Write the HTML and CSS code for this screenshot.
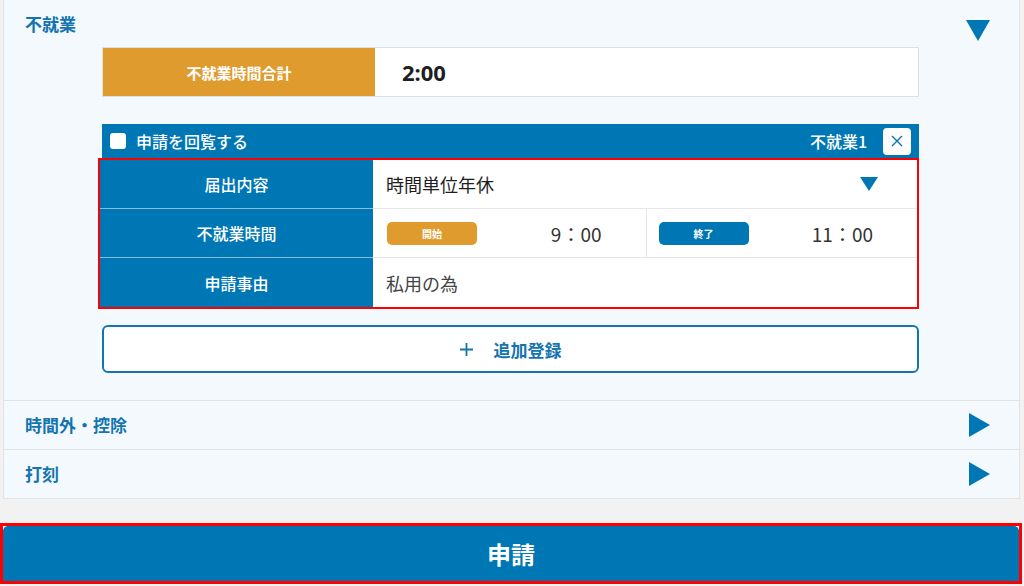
FILE: index.html
```html
<!DOCTYPE html>
<html lang="ja">
<head>
    <meta charset="UTF-8">
    <meta name="viewport" content="width=device-width, initial-scale=1.0">
    <title>不就業申請</title>
    <link rel="stylesheet" href="styles.css">
</head>
<body>
    <div class="panel">
        <section class="section">
            <div class="section-head open">
                <h2 class="section-title">不就業</h2>
                <svg class="tri-down" viewBox="0 0 24 21"><polygon points="0,0 24,0 12,21" /></svg>
            </div>
            <div class="section-body">
                <div class="summary">
                    <div class="summary-label">不就業時間合計</div>
                    <div class="summary-value">2:00</div>
                </div>

                <div class="card">
                    <div class="card-head">
                        <span class="check"></span>
                        <span class="card-title">申請を回覧する</span>
                        <span class="card-no">不就業1</span>
                        <button class="close-btn">
                            <svg viewBox="0 0 12 12"><path d="M1 1 L11 11 M11 1 L1 11" /></svg>
                        </button>
                    </div>
                    <div class="detail">
                        <div class="row">
                            <div class="row-label">届出内容</div>
                            <div class="row-value select">
                                <span>時間単位年休</span>
                                <svg class="tri-small" viewBox="0 0 18 14"><polygon points="0,0 18,0 9,14" /></svg>
                            </div>
                        </div>
                        <div class="row">
                            <div class="row-label">不就業時間</div>
                            <div class="row-value times">
                                <div class="time-cell">
                                    <span class="pill pill-start">開始</span>
                                    <span class="time">9：00</span>
                                </div>
                                <div class="time-cell">
                                    <span class="pill pill-end">終了</span>
                                    <span class="time">11：00</span>
                                </div>
                            </div>
                        </div>
                        <div class="row">
                            <div class="row-label">申請事由</div>
                            <div class="row-value reason">私用の為</div>
                        </div>
                    </div>
                </div>

                <button class="add-btn">
                    <svg class="plus" viewBox="0 0 13 13"><path d="M6.5 0 V13 M0 6.5 H13" /></svg>
                    追加登録
                </button>
            </div>
        </section>

        <section class="section">
            <div class="section-head">
                <h2 class="section-title">時間外・控除</h2>
                <svg class="tri-right" viewBox="0 0 21 24"><polygon points="0,0 21,12 0,24" /></svg>
            </div>
        </section>

        <section class="section">
            <div class="section-head">
                <h2 class="section-title">打刻</h2>
                <svg class="tri-right" viewBox="0 0 21 24"><polygon points="0,0 21,12 0,24" /></svg>
            </div>
        </section>
    </div>

    <div class="submit-wrap">
        <button class="submit-btn">申請</button>
    </div>
</body>
</html>
```

FILE: styles.css
```css
body {
    margin: 0;
    background: #f2f2f2;
    font-family: "Noto Sans CJK JP", "Noto Sans", sans-serif;
    color: #222;
}

button {
    font-family: inherit;
    cursor: pointer;
}

.panel {
    margin: 0 4px 0 3px;
    background: #f3f9fd;
    border: 1px solid #e1e3e5;
    border-top: none;
}

.section + .section {
    border-top: 1px solid #e1e3e5;
}

.section-head {
    display: flex;
    justify-content: space-between;
    align-items: center;
    height: 48px;
    padding: 0 29px 0 21px;
    box-sizing: border-box;
}

.section-head.open {
    align-items: flex-start;
    height: 47px;
    padding-top: 13px;
}

.section-title {
    margin: 0;
    font-size: 17px;
    line-height: 22px;
    font-weight: 700;
    color: #1474b0;
}

.tri-down {
    width: 24px;
    height: 21px;
    margin-top: 7px;
    fill: #0077b5;
}

.tri-right {
    width: 21px;
    height: 24px;
    fill: #0077b5;
}

.section-body {
    width: 817px;
    margin-left: 98px;
    padding-bottom: 27px;
}

/* summary */
.summary {
    display: flex;
    height: 50px;
    border: 1px solid #dcdfe2;
    box-sizing: border-box;
    background: #fff;
}

.summary-label {
    width: 272px;
    background: #e09b2e;
    color: #fff;
    font-size: 15px;
    font-weight: 700;
    display: flex;
    align-items: center;
    justify-content: center;
}

.summary-value {
    display: flex;
    align-items: center;
    padding-left: 27px;
    font-family: "Noto Sans", sans-serif;
    font-size: 22px;
    font-weight: 700;
    color: #1e1e1e;
}

/* card */
.card {
    margin-top: 27px;
}

.card-head {
    display: flex;
    align-items: center;
    height: 34px;
    padding: 0 8px;
    background: #0077b5;
    color: #fff;
    font-size: 16px;
    font-weight: 500;
}

.check {
    width: 16px;
    height: 16px;
    background: #fff;
    border-radius: 3px;
    margin-right: 10px;
}

.card-no {
    margin-left: auto;
}

.close-btn {
    width: 28px;
    height: 27px;
    margin-left: 16px;
    padding: 0;
    border: none;
    border-radius: 4px;
    background: #fff;
    display: flex;
    align-items: center;
    justify-content: center;
}

.close-btn svg {
    width: 12px;
    height: 12px;
    stroke: #0077b5;
    stroke-width: 1.4;
}

.detail {
    margin-left: -4px;
    border: 2px solid #f00;
    background: #fff;
}

.row {
    display: flex;
    height: 49px;
}

.row-label {
    width: 273px;
    background: #0077b5;
    color: #fff;
    font-size: 16px;
    font-weight: 500;
    display: flex;
    align-items: center;
    justify-content: center;
    border-bottom: 1px solid #8fbbdb;
}

.row-value {
    flex: 1;
    display: flex;
    align-items: center;
    padding-left: 13px;
    font-size: 18px;
    border-bottom: 1px solid #e6e6e6;
}

.row:last-child .row-label,
.row:last-child .row-value {
    border-bottom: none;
}

.select {
    justify-content: space-between;
    padding-right: 39px;
    color: #1e1e1e;
}

.tri-small {
    width: 18px;
    height: 14px;
    fill: #0077b5;
}

.reason {
    color: #444;
}

.times {
    padding-left: 0;
}

.time-cell {
    flex: 1;
    height: 100%;
    display: flex;
    align-items: center;
    justify-content: space-between;
    padding: 0 44px 0 14px;
}

.time-cell + .time-cell {
    border-left: 1px solid #e6e6e6;
    padding-left: 12px;
}

.pill {
    width: 90px;
    height: 23px;
    border-radius: 5px;
    color: #fff;
    font-size: 10px;
    font-weight: 700;
    display: flex;
    align-items: center;
    justify-content: center;
}

.pill-start {
    background: #e09b2e;
}

.pill-end {
    background: #0077b5;
}

.time {
    font-size: 19px;
    color: #333;
}

.add-btn {
    width: 100%;
    height: 48px;
    margin-top: 16px;
    border: 2px solid #1474b0;
    border-radius: 6px;
    background: #fff;
    color: #1474b0;
    font-size: 17px;
    font-weight: 700;
    display: flex;
    align-items: center;
    justify-content: center;
}

.plus {
    width: 13px;
    height: 13px;
    margin-right: 21px;
    stroke: #1474b0;
    stroke-width: 1.8;
}

/* submit */
.submit-wrap {
    margin: 24px 2px 0 0;
    border: 3px solid #f00;
    background: #fff;
}

.submit-btn {
    display: block;
    width: 100%;
    height: 55px;
    border: none;
    border-radius: 5px 5px 0 0;
    background: #0077b5;
    color: #fff;
    font-size: 24px;
    font-weight: 700;
}
```
